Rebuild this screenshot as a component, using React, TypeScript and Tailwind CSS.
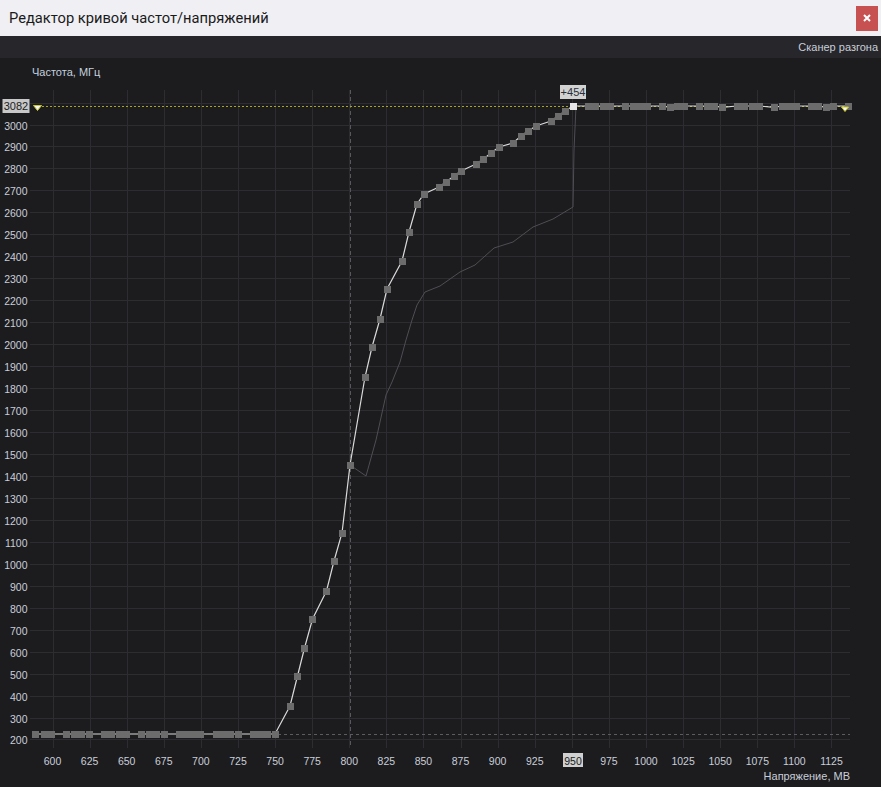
import React from 'react';

// chart scale: mV -> px, MHz -> px (page coordinates)
const fx = (v: number) => 52.5 + (v - 600) * 1.4838;
const fy = (f: number) => 124.5 + (3000 - f) * 0.21964;

const lowXs = [
  35.7, 44.3, 51.7, 66.7, 74, 81.7, 89.3, 104, 111.7, 119.3, 126.7, 141.7, 149, 156.7, 164, 179, 186, 193.3,
  200.7, 216, 223.3, 230.7, 238, 253, 260.3, 267.7, 275,
];

const rise: [number, number][] = [
  [290, 706], [297.5, 676], [304.5, 648], [312.5, 619], [326.5, 591], [334, 561], [342, 533], [350, 465],
  [365, 377], [372, 347], [380, 319], [387, 289], [402, 261], [409, 232], [417, 204], [424, 194],
  [439, 187], [446, 182], [454, 176], [461, 171], [476, 164], [483.5, 159], [491, 153], [499, 147],
  [513, 143], [521, 136], [528, 131], [536, 126], [551, 121], [558, 116], [565, 111],
];

const flat: [number, number][] = [
  [588, 106], [595.5, 106], [603, 106], [610, 106], [625, 106], [633, 106], [640.5, 106], [647, 106],
  [662, 106], [670, 107.3], [677, 106], [684, 106], [699, 106], [707, 106], [714, 106], [722, 107.3],
  [737, 106], [744, 106], [752, 106], [759, 106], [774, 107.3], [782, 106], [789, 106], [796, 106],
  [811, 106], [818, 106], [826, 107.3], [833, 106], [848, 106],
];

const selected: [number, number] = [573, 106];

const ghost: [number, number][] = [
  [350, 465], [366, 476], [376, 440], [386, 395], [392, 382], [400, 362], [406, 340], [412, 320],
  [417, 305], [425, 292], [440, 286], [460, 272], [475, 265], [494, 248], [513, 242], [533, 227],
  [553, 219], [573, 207], [574, 150], [576, 106],
];

const freqs = Array.from({ length: 30 }, (_, i) => 200 + i * 100);
const volts = Array.from({ length: 22 }, (_, i) => 600 + i * 25);

const low: [number, number][] = lowXs.map((x) => [x, 734]);
const curve: [number, number][] = [...low, ...rise, selected, ...flat];

const pts = (arr: [number, number][]) => arr.map(([x, y]) => `${x},${y}`).join(' ');

const Chart: React.FC = () => (
  <svg width={881} height={690} className="block font-['Liberation_Sans',sans-serif]">
    <g transform="translate(0,-79)">
      {/* grid */}
      {freqs.map((f) => (
        <line key={f} x1={30} x2={850} y1={Math.round(fy(f)) + 0.5} y2={Math.round(fy(f)) + 0.5} stroke="#2d2d31" />
      ))}
      {volts.map((v) => (
        <line key={v} x1={Math.round(fx(v)) + 0.5} x2={Math.round(fx(v)) + 0.5} y1={90} y2={748} stroke="#2d2d31" />
      ))}

      {/* markers */}
      <line x1={350.5} x2={350.5} y1={90} y2={748} stroke="#58585c" strokeDasharray="4 3" />
      <line x1={278} x2={850} y1={734.5} y2={734.5} stroke="#5c5c60" strokeDasharray="3 3" />
      <line x1={42} x2={850} y1={106.5} y2={106.5} stroke="#a6a625" strokeDasharray="2 2" />

      {/* curves */}
      <polyline points={pts(ghost)} fill="none" stroke="#4e4e53" strokeWidth={1} />
      <polyline points={pts(curve)} fill="none" stroke="#dadada" strokeWidth={1.2} />
      {[...low, ...rise, ...flat].map(([x, y], i) => (
        <rect key={i} x={Math.round(x - 3.5)} y={Math.round(y - 3.5)} width={7} height={7} fill="#6c6c6c" />
      ))}
      <rect x={selected[0] - 3} y={selected[1] - 3} width={7} height={7} fill="#e6e6e6" />

      {/* axis labels (3100 sits under the current-value badge) */}
      {freqs
        .filter((f) => f !== 3100)
        .map((f) => (
          <text key={f} x={27.5} y={Math.round(fy(f)) + 4.5} textAnchor="end" className="fill-[#c9ced8] text-[10.5px]">
            {f}
          </text>
        ))}
      {volts.map((v) =>
        v === 950 ? null : (
          <text key={v} x={fx(v)} y={764.5} textAnchor="middle" className="fill-[#c9ced8] text-[10.5px]">
            {v}
          </text>
        ),
      )}

      {/* current value badges */}
      <rect x={2.5} y={99} width={27} height={14} fill="#c8c8c8" />
      <text x={16} y={110} textAnchor="middle" className="fill-[#202020] text-[11px]">
        3082
      </text>
      <polygon points="33.5,105.5 41.5,105.5 37.5,110.5" fill="#f4f4f4" stroke="#c8c820" strokeWidth={1} />
      <polygon points="841.5,107 848.5,107 845,111.5" fill="#f4f4f4" stroke="#c8c820" strokeWidth={1} />

      <rect x={560} y={85} width={26} height={14} fill="#d2d2d2" />
      <text x={573} y={96} textAnchor="middle" className="fill-[#28303c] text-[11px]">
        +454
      </text>

      <rect x={563} y={753} width={20} height={14} fill="#d0d0d0" />
      <text x={573} y={764.5} textAnchor="middle" className="fill-[#202020] text-[10.5px]">
        950
      </text>
    </g>
  </svg>
);

export default function App() {
  return (
    <div className="flex h-[787px] w-[881px] flex-col overflow-hidden bg-[#1c1c1f] font-['Liberation_Sans',sans-serif]">
      {/* Title bar */}
      <div className="flex h-9 shrink-0 items-center justify-between bg-[#efeff4] pl-[9px] pr-[3px]">
        <span className="font-['Roboto',sans-serif] text-[14.7px] text-[#1a1a1a]">
          Редактор кривой частот/напряжений
        </span>
        <button className="flex h-[25px] w-[22px] items-center justify-center bg-[#c75050]">
          <svg width="8" height="8" viewBox="0 0 8 8">
            <path d="M1 1L7 7M7 1L1 7" stroke="#fff" strokeWidth="2" />
          </svg>
        </button>
      </div>

      {/* Toolbar */}
      <div className="flex h-[22px] shrink-0 items-center justify-end bg-[#26262b] pr-[3px]">
        <span className="text-[11px] text-[#c9ced8]">Сканер разгона</span>
      </div>

      {/* Chart */}
      <div className="flex flex-1 flex-col">
        <div className="h-[21px] pl-[32px] pt-[7px] text-[11px] leading-[14px] text-[#c4d0de]">Частота, МГц</div>
        <Chart />
        <div className="pr-[31px] text-right text-[11px] leading-[14px] text-[#c9ced8]">Напряжение, МВ</div>
      </div>
    </div>
  );
}
